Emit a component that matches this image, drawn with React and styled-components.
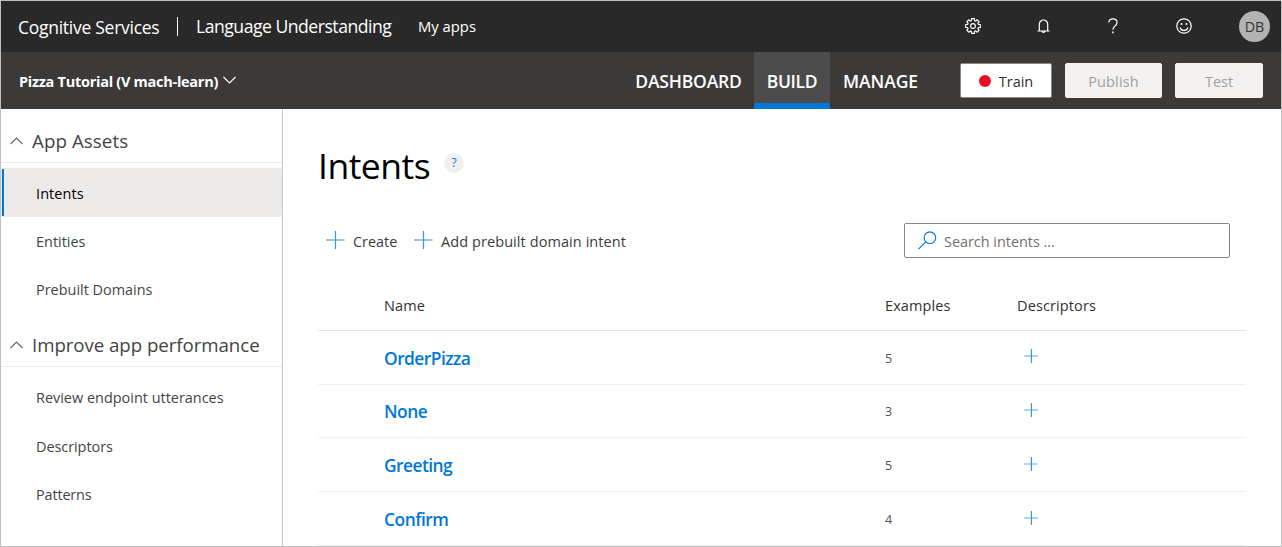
import React from "react";
import styled, { createGlobalStyle } from "styled-components";

const Global = createGlobalStyle`
  *, *::before, *::after { box-sizing: border-box; }
  html, body { margin: 0; padding: 0; background: #fff; }
  body { font-family: "Open Sans", "Noto Sans", sans-serif; color: #333; overflow: hidden; }
  button, input { font-family: inherit; }
`;

const Page = styled.div`
  width: 1282px;
  height: 547px;
  border: 1px solid #c1c1c1;
  background: #fff;
  display: flex;
  flex-direction: column;
  overflow: hidden;
`;

const Label = styled.span`
  font-size: ${(p) => p.$size}px;
  font-weight: ${(p) => p.$weight || 400};
  letter-spacing: ${(p) => p.$track || 0}px;
  line-height: 20px;
  white-space: nowrap;
`;

const TopBar = styled.header`
  flex: 0 0 51px;
  background: #292929;
  color: #fff;
  display: flex;
  align-items: center;
  padding: 0 11px 0 17px;
`;

const Brand = styled.div`
  width: 160px;
  padding-top: 1px;
  display: flex;
`;

const Divider = styled.i`
  width: 1px;
  height: 19px;
  background: #fff;
  margin: 0 18px 1px -1px;
`;

const Product = styled.div`
  width: 222px;
  display: flex;
  margin-top: -2px;
`;

const MyApps = styled.a`
  display: flex;
  margin-top: -2px;
`;

const TopIcons = styled.div`
  margin-left: auto;
  display: flex;
  align-items: center;
  color: #fff;
`;

const TopIcon = styled.div`
  width: ${(p) => p.$width}px;
  margin-top: -1px;
  display: flex;
`;

const Avatar = styled.div`
  width: 31px;
  height: 31px;
  border-radius: 50%;
  background: #b3b3b3;
  color: #333;
  display: flex;
  align-items: center;
  justify-content: center;
  padding-top: 1px;
`;

const AppBar = styled.nav`
  flex: 0 0 57px;
  background: #3b3a39;
  color: #fff;
  display: flex;
  align-items: center;
  padding: 0 18px 0 18px;
`;

const AppName = styled.div`
  display: flex;
  align-items: center;
  width: 604px;
  gap: 5px;
  padding-top: 2px;
  & > svg { margin-top: -3px; }
`;

const Tab = styled.a`
  height: 57px;
  width: ${(p) => p.$width}px;
  display: flex;
  align-items: center;
  justify-content: center;
  padding-top: ${(p) => (p.$active ? 6 : 0)}px;
  background: ${(p) => (p.$active ? "#4c4c4c" : "transparent")};
  border-bottom: ${(p) => (p.$active ? "6px solid #0078d7" : "0")};
`;

const Actions = styled.div`
  margin-left: auto;
  display: flex;
  gap: 13px;
`;

const ActionButton = styled.button`
  height: 35px;
  width: ${(p) => p.$width}px;
  padding: 2px 0 0;
  border: 1px solid ${(p) => (p.$primary ? "#8a8886" : "#f3f2f1")};
  border-radius: 2px;
  background: ${(p) => (p.$primary ? "#fff" : "#f3f2f1")};
  color: ${(p) => (p.$primary ? "#323130" : "#a19f9d")};
  display: flex;
  align-items: center;
  justify-content: center;
  gap: 8px;
`;

const Dot = styled.i`
  width: 12px;
  height: 12px;
  border-radius: 50%;
  background: #e81123;
  margin-top: -2px;
`;

const Body = styled.div`
  flex: 1;
  min-height: 0;
  display: flex;
`;

const Sidebar = styled.aside`
  flex: 0 0 282px;
  border-right: 1px solid #c8c8c8;
`;

const SectionHead = styled.div`
  height: 54px;
  padding: 11px 0 0 9px;
  border-bottom: 1px solid #eaeaea;
  display: flex;
  align-items: center;
  gap: 9px;
  color: #444;
  margin-bottom: ${(p) => p.$gap}px;
  & > svg { margin-top: -1px; }
`;

const NavItem = styled.a`
  height: ${(p) => p.$height || 48}px;
  padding: 2px 0 0 35px;
  display: flex;
  align-items: center;
  color: ${(p) => (p.$active ? "#000" : "#444")};
  background: ${(p) => (p.$active ? "linear-gradient(#0078d7, #0078d7) 1px 1px / 2px 47px no-repeat, #edebe9" : "transparent")};
  border-radius: 2px;
`;

const Main = styled.main`
  flex: 1;
  padding: 35px 35px 0 35px;
`;

const TitleRow = styled.div`
  height: 42px;
  display: flex;
  align-items: center;
  color: #000;
`;

const TitleText = styled.h1`
  margin: 0;
  width: 126px;
  font-size: 35.5px;
  line-height: 42px;
  font-weight: 400;
  letter-spacing: -0.5px;
`;

const HelpBadge = styled.span`
  width: 20px;
  height: 20px;
  border-radius: 50%;
  background: #f1f0ef;
  color: #0078d7;
  display: flex;
  align-items: center;
  justify-content: center;
  margin-top: -4px;
`;

const Toolbar = styled.div`
  margin-top: 37px;
  height: 35px;
  padding: 0 16px 0 8px;
  display: flex;
  align-items: center;
`;

const Command = styled.button`
  border: 0;
  padding: 0;
  background: none;
  color: #3c3c3c;
  display: flex;
  align-items: center;
  gap: 8px;
  width: ${(p) => p.$width}px;
  & > span { padding-top: 2px; }
  & > svg { margin-top: -1px; }
`;

const SearchBox = styled.label`
  margin-left: auto;
  width: 326px;
  height: 35px;
  border: 1px solid #8a8886;
  border-radius: 2px;
  padding-left: 13px;
  display: flex;
  align-items: center;
  gap: 7px;
  color: #707070;
  & > span { padding-top: 2px; }
  & > svg { margin-top: -1px; }
`;

const TableRow = styled.div`
  display: grid;
  grid-template-columns: 501px 132px 1fr;
  height: ${(p) => p.$height}px;
  padding: ${(p) => p.$top}px 0 0 66px;
  width: 928px;
  align-items: center;
  border-bottom: 1px solid ${(p) => (p.$head ? "#e4e4e4" : "#f0f0f0")};
  color: #333;
`;

const IntentLink = styled.a`
  color: #0078d7;
  display: flex;
  margin-top: -2px;
`;

const Count = styled.div`
  display: flex;
  color: #505050;
`;

const AddCell = styled.div`
  padding-left: 7px;
  margin-top: ${(p) => (p.$raised ? -6 : -4)}px;
  display: flex;
`;

const Chevron = ({ up, color }) => (
  <svg width="13" height="8" viewBox="0 0 13 8" fill="none" stroke={color} strokeWidth="1.1">
    <path d={up ? "M.5 7 6.5 1l6 6" : "M.5 1l6 6 6-6"} />
  </svg>
);

const Plus = ({ size }) => (
  <svg width={size} height={size} viewBox={`0 0 ${size} ${size}`} stroke="#3a96df" strokeWidth="1.2">
    <path d={size > 14 ? "M9.5 0v18" : "M7.4 0v14"} />
    <path d={size > 14 ? "M0 9h18.5" : "M0 7h14"} opacity={size > 14 ? 0.9 : 0.65} />
  </svg>
);

const gearPath = () => {
  const pts = [];
  for (let i = 0; i < 8; i++) {
    const a = (i * Math.PI) / 4;
    [[-0.27, 5.6], [-0.2, 7.5], [0.2, 7.5], [0.27, 5.6]].forEach(([d, r]) => {
      pts.push(`${(8 + r * Math.sin(a + d)).toFixed(2)} ${(8 - r * Math.cos(a + d)).toFixed(2)}`);
    });
  }
  return `M${pts.join("L")}Z`;
};

const Gear = () => (
  <svg width="16" height="16" viewBox="0 0 16 16" fill="none" stroke="#fff" strokeWidth="1.1" strokeLinejoin="round">
    <path d={gearPath()} />
    <circle cx="8" cy="8" r="2.4" />
  </svg>
);

const Bell = () => (
  <svg width="13" height="15" viewBox="0 0 13 15" fill="none" stroke="#fff" strokeWidth="1.2">
    <path d="M.5 12h12M2.3 12V5.2A4.2 4.2 0 0 1 6.5 1a4.2 4.2 0 0 1 4.2 4.2V12M4.9 12.2a1.65 1.65 0 0 0 3.2 0" />
  </svg>
);

const Question = () => (
  <svg width="10" height="16" viewBox="0 0 10 16" fill="none" stroke="#fff" strokeWidth="1.2">
    <path d="M.8 4.6C.8 2.2 2.5.8 4.9.8s4.1 1.3 4.1 3.6c0 1.8-1 2.7-2.2 3.8C5.6 9.2 4.9 10 4.9 11.8" />
    <path d="M4.9 13.6v1.7" strokeWidth="1.5" />
  </svg>
);

const Smile = () => (
  <svg width="16" height="16" viewBox="0 0 16 16" fill="none" stroke="#fff" strokeWidth="1.2">
    <circle cx="8" cy="8" r="7.2" />
    <path d="M4 9.5a4.2 4.2 0 0 0 8 0" />
    <circle cx="5.5" cy="6" r="1" fill="#fff" stroke="none" />
    <circle cx="10.5" cy="6" r="1" fill="#fff" stroke="none" />
  </svg>
);

const SearchIcon = () => (
  <svg width="19" height="19" viewBox="0 0 19 19" fill="none" stroke="#0078d7" strokeWidth="1.15">
    <circle cx="11.9" cy="6.7" r="5.8" />
    <path d="M7.8 10.8.4 18.2" />
  </svg>
);

const assets = [
  { name: "Intents", active: true, height: 49, track: 0.1 },
  { name: "Entities", track: 0 },
  { name: "Prebuilt Domains", track: 0 },
];

const performance = [
  { name: "Review endpoint utterances", track: 0 },
  { name: "Descriptors", height: 49, track: -0.05 },
  { name: "Patterns", track: -0.15 },
];

const intents = [
  { name: "OrderPizza", examples: 5, height: 54, track: -0.55, raised: true },
  { name: "None", examples: 3, height: 53, track: -0.5 },
  { name: "Greeting", examples: 5, height: 54, track: -0.55 },
  { name: "Confirm", examples: 4, height: 54, track: -0.5 },
];

const NavList = ({ items }) =>
  items.map((it) => (
    <NavItem key={it.name} $active={it.active} $height={it.height}>
      <Label $size={14.45} $track={it.track}>{it.name}</Label>
    </NavItem>
  ));

export default function App() {
  return (
    <Page>
      <Global />
      <TopBar>
        <Brand><Label $size={17.5} $track={-0.27}>Cognitive Services</Label></Brand>
        <Divider />
        <Product><Label $size={17.6} $track={-0.49}>Language Understanding</Label></Product>
        <MyApps><Label $size={14.8} $weight={500}>My apps</Label></MyApps>
        <TopIcons>
          <TopIcon $width={72}><Gear /></TopIcon>
          <TopIcon $width={71}><Bell /></TopIcon>
          <TopIcon $width={68}><Question /></TopIcon>
          <TopIcon $width={63}><Smile /></TopIcon>
          <Avatar><Label $size={14.3}>DB</Label></Avatar>
        </TopIcons>
      </TopBar>
      <AppBar>
        <AppName>
          <Label $size={14.5} $weight={700} $track={-0.27}>Pizza Tutorial (V mach-learn)</Label>
          <Chevron color="#fff" />
        </AppName>
        <Tab $width={131}><Label $size={17.5} $weight={600} $track={-0.2}>DASHBOARD</Label></Tab>
        <Tab $width={76} $active><Label $size={17.5} $weight={600} $track={-0.3}>BUILD</Label></Tab>
        <Tab $width={101}><Label $size={17.5} $weight={600} $track={-0.1}>MANAGE</Label></Tab>
        <Actions>
          <ActionButton $width={92} $primary><Dot /><Label $size={14.5} $weight={500}>Train</Label></ActionButton>
          <ActionButton $width={97}><Label $size={14.5} $weight={500} $track={0.15}>Publish</Label></ActionButton>
          <ActionButton $width={88}><Label $size={14.5} $weight={500}>Test</Label></ActionButton>
        </Actions>
      </AppBar>
      <Body>
        <Sidebar>
          <SectionHead $gap={5}>
            <Chevron up color="#666" />
            <Label $size={18.8} $track={0.05}>App Assets</Label>
          </SectionHead>
          <NavList items={assets} />
          <SectionHead $gap={6}>
            <Chevron up color="#666" />
            <Label $size={18.7} $track={-0.06}>Improve app performance</Label>
          </SectionHead>
          <NavList items={performance} />
        </Sidebar>
        <Main>
          <TitleRow>
            <TitleText>Intents</TitleText>
            <HelpBadge><Label $size={12}>?</Label></HelpBadge>
          </TitleRow>
          <Toolbar>
            <Command $width={88}><Plus size={19} /><Label $size={14.4}>Create</Label></Command>
            <Command $width={220}><Plus size={19} /><Label $size={14.5} $track={0.08}>Add prebuilt domain intent</Label></Command>
            <SearchBox><SearchIcon /><Label $size={14.4}>Search intents ...</Label></SearchBox>
          </Toolbar>
          <TableRow $height={73} $top={24} $head>
            <Label $size={14.5} $weight={500} $track={0.1}>Name</Label>
            <Label $size={14.5} $weight={500} $track={0.1}>Examples</Label>
            <Label $size={14.5} $weight={500} $track={0.12}>Descriptors</Label>
          </TableRow>
          {intents.map((it) => (
            <TableRow key={it.name} $height={it.height} $top={2}>
              <IntentLink><Label $size={17.4} $weight={600} $track={it.track}>{it.name}</Label></IntentLink>
              <Count><Label $size={12.5}>{it.examples}</Label></Count>
              <AddCell $raised={it.raised}><Plus size={14} /></AddCell>
            </TableRow>
          ))}
        </Main>
      </Body>
    </Page>
  );
}
